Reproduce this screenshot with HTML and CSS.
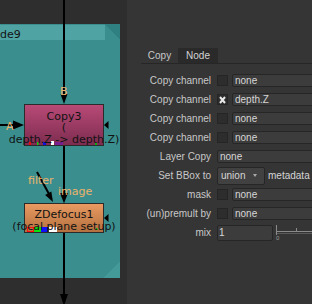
FILE: index.html
```html
<!DOCTYPE html>
<html>
<head>
<meta charset="utf-8">
<link rel="stylesheet" href="styles.css">
</head>
<body>
<div class="app">
  <div class="graph">
    <div class="backdrop">
      <div class="bd-head"><span class="bd-title">de9</span></div>
      <div class="bd-fold"></div>
      <div class="bd-resize"></div>
    </div>
    <svg class="wires" width="127" height="304" viewBox="0 0 127 304">
      <g fill="#000">
        <rect x="63" y="0" width="2" height="96"/>
        <polygon points="60.5,94 67.5,94 64,104"/>
        <rect x="0" y="124" width="14" height="2"/>
        <polygon points="13,120.5 13,129.5 24,125"/>
        <polygon points="108.5,121 108.5,129 104,125"/>
        <rect x="63" y="146" width="2" height="50"/>
        <polygon points="60,193 68,193 64,203.5"/>
        <polygon points="108.5,214 108.5,222 104,218"/>
        <rect x="63" y="233" width="2" height="63"/>
        <polygon points="60,294 68,294 64,306"/>
        <polygon points="45.1,194.9 51.3,191.5 53,202"/>
      </g>
      <line x1="37" y1="172" x2="49" y2="194" stroke="#000" stroke-width="2"/>
    </svg>
    <div class="node copy">
      <svg class="chan" width="80" height="42" viewBox="0 0 80 42">
        <rect x="5" y="38" width="2" height="3" fill="#e01010"/>
        <rect x="13" y="38" width="1.5" height="3" fill="#10d010"/>
        <rect x="19" y="38" width="3" height="3" fill="#1010e0"/>
        <rect x="27" y="37" width="3" height="4" fill="#ffffff"/>
        <rect x="31" y="38" width="8" height="3" fill="#7a1f92"/>
        <rect x="71" y="39" width="2" height="2" fill="#10b010"/>
      </svg>
      <span class="ln">Copy3</span>
      <span class="ln">(</span>
      <span class="ln">depth.Z -&gt; depth.Z)</span>
    </div>
    <div class="node zdef">
      <svg class="chan" width="80" height="30" viewBox="0 0 80 30">
        <rect x="3.5" y="24.5" width="6" height="4" fill="none" stroke="#ff1010" stroke-width="1"/>
        <rect x="10" y="24" width="7" height="5" fill="#10e010"/>
        <rect x="17" y="24" width="7" height="5" fill="#1010ff"/>
        <rect x="25" y="24" width="8" height="5" fill="#ffffff"/>
        <rect x="72" y="25" width="1.5" height="2" fill="#10b010"/>
      </svg>
      <span class="ln">ZDefocus1</span>
      <span class="ln">(focal plane setup)</span>
    </div>
    <span class="lbl lbl-b">B</span>
    <span class="lbl lbl-a">A</span>
    <span class="lbl lbl-filter">filter</span>
    <span class="lbl lbl-image">image</span>
  </div>
  <div class="panel">
    <div class="tabs">
      <div class="tab tab-copy">Copy</div>
      <div class="tab tab-node">Node</div>
    </div>
    <div class="rows">
      <div class="row"><span class="label">Copy channel</span><span class="check"></span><span class="field">none</span></div>
      <div class="row"><span class="label">Copy channel</span><span class="check"><svg width="7" height="8" viewBox="0 0 7 8"><path d="M1 1 L6 7 M6 1 L1 7" stroke="#e8e8e8" stroke-width="2"/></svg></span><span class="field">depth.Z</span></div>
      <div class="row"><span class="label">Copy channel</span><span class="check"></span><span class="field">none</span></div>
      <div class="row"><span class="label">Copy channel</span><span class="check"></span><span class="field">none</span></div>
      <div class="row"><span class="label">Layer Copy</span><span class="field wide">none</span></div>
      <div class="row"><span class="label">Set BBox to</span><span class="menu">union<i class="caret"></i></span><span class="extra">metadata</span></div>
      <div class="row"><span class="label">mask</span><span class="check"></span><span class="field">none</span></div>
      <div class="row"><span class="label">(un)premult by</span><span class="check"></span><span class="field">none</span></div>
      <div class="row"><span class="label">mix</span><span class="num">1</span>
        <div class="slider">
          <svg width="40" height="10" viewBox="0 0 40 10">
            <rect x="0" y="0" width="1" height="10" fill="#8a8a8a"/>
            <rect x="1" y="6" width="39" height="1" fill="#8a8a8a"/>
            <rect x="1" y="8" width="39" height="1" fill="#5a5a5a"/>
            <rect x="20" y="3" width="1" height="3" fill="#8a8a8a"/>
          </svg>
          <span class="tick0">0</span>
        </div>
      </div>
    </div>
  </div>
</div>
</body>
</html>
```

FILE: styles.css
```css
* { box-sizing: border-box; }
html, body { margin: 0; padding: 0; }
body { width: 312px; height: 304px; overflow: hidden; background: #353535; }

.app { display: flex; width: 312px; height: 304px; }

/* node graph */
.graph {
  position: relative;
  width: 127px;
  height: 304px;
  flex: none;
  background: #2e2e2e;
  overflow: hidden;
  font-family: "DejaVu Sans", sans-serif;
  font-size: 11px;
}
.backdrop {
  position: absolute;
  left: -200px;
  top: 24px;
  width: 320px;
  height: 254px;
  background: #3a8e8e;
  padding-top: 1px;
}
.bd-head {
  position: relative;
  height: 15px;
  margin-right: 15px;
  background: #4fa3a3;
}
.bd-title {
  position: absolute;
  left: 200px;
  top: 3px;
  line-height: 13px;
  color: #141414;
  white-space: nowrap;
}
.bd-fold {
  position: absolute;
  right: 0;
  top: 0;
  width: 15px;
  height: 16px;
  background: linear-gradient(to bottom left, #2f8181 50%, transparent 50%);
}
.bd-resize {
  position: absolute;
  right: 0;
  bottom: 0;
  width: 17px;
  height: 16px;
  background: linear-gradient(to top left, #449999 50%, transparent 50%);
}
.wires { position: absolute; left: 0; top: 0; }

.node {
  position: absolute;
  left: 24px;
  width: 80px;
  border: 1px solid #2b2b2b;
  display: flex;
  flex-direction: column;
  align-items: center;
  color: #121212;
  line-height: 11.5px;
  white-space: nowrap;
}
.node .chan { position: absolute; left: -1px; top: -1px; }
.node .ln { position: relative; }
.node.copy {
  top: 104px;
  height: 42px;
  padding-top: 5.5px;
  background: linear-gradient(#b84a76, #7d2c50);
}
.node.zdef {
  top: 203px;
  height: 30px;
  padding-top: 5px;
  background: linear-gradient(#e99a61, #b4703f);
}

.lbl {
  position: absolute;
  line-height: 13px;
  color: #ecb36b;
  white-space: nowrap;
}
.lbl-b { left: 60px; top: 85px; }
.lbl-a { left: 6px; top: 120px; }
.lbl-filter { left: 28px; top: 174px; }
.lbl-image { left: 58px; top: 185px; }

/* properties panel */
.panel {
  flex: 1;
  min-width: 0;
  overflow: hidden;
  background: #353535;
  padding-top: 48px;
  font-family: "Liberation Sans", Arial, sans-serif;
  font-size: 10px;
  color: #c8c8c8;
}
.tabs {
  display: flex;
  margin-left: 14px;
  height: 16px;
  border-bottom: 1px solid #262626;
}
.tab { height: 15px; line-height: 15px; text-align: center; }
.tab-copy { width: 37px; }
.tab-node { width: 40px; background: #2a2a2a; color: #d4d4d4; }

.rows { margin-top: 7px; display: flex; flex-direction: column; }
.row { display: flex; align-items: center; height: 19px; white-space: nowrap; }
.label { width: 84px; flex: none; text-align: right; margin-right: 6px; }
.check {
  width: 11px;
  height: 11px;
  flex: none;
  margin-right: 4px;
  background: #2d2d2d;
  border: 1px solid #252525;
  display: flex;
  align-items: center;
  justify-content: center;
}
.field {
  flex: none;
  width: 110px;
  height: 13px;
  line-height: 11px;
  padding-left: 2px;
  background: #3c3c3c;
  border: 1px solid #262626;
  border-radius: 2px;
  color: #d6d6d6;
}
.menu {
  flex: none;
  display: flex;
  align-items: center;
  width: 48px;
  height: 18px;
  padding-left: 3px;
  padding-right: 7px;
  background: #414141;
  border: 1px solid #262626;
  border-radius: 2px;
  color: #d6d6d6;
}
.caret {
  margin-left: auto;
  width: 0;
  height: 0;
  border-left: 2.5px solid transparent;
  border-right: 2.5px solid transparent;
  border-top: 3px solid #a8a8a8;
}
.extra { margin-left: 3px; color: #d6d6d6; }
.num {
  flex: none;
  width: 56px;
  height: 16px;
  line-height: 14px;
  padding-left: 1px;
  background: #3c3c3c;
  border: 1px solid #262626;
  border-radius: 2px;
  color: #d6d6d6;
}
.slider {
  position: relative;
  flex: none;
  width: 40px;
  height: 16px;
  margin-left: 3px;
}
.slider svg { position: absolute; left: 0; top: 0; }
.tick0 {
  position: absolute;
  left: 0;
  top: 10px;
  font-size: 6px;
  line-height: 6px;
  color: #9a9a9a;
}
```
